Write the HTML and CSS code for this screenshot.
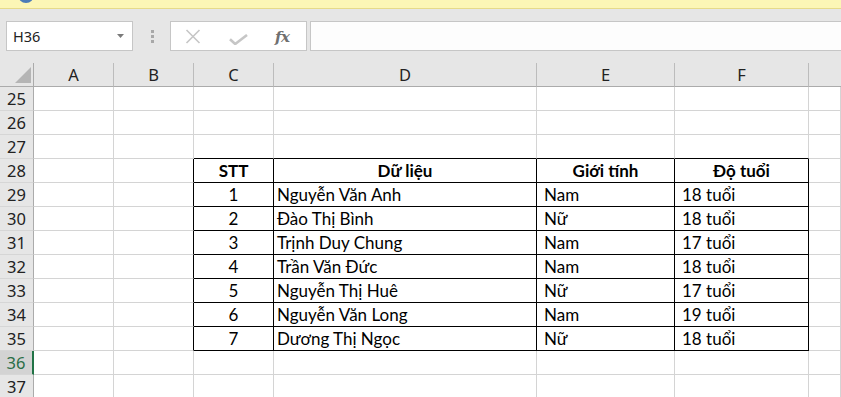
FILE: index.html
```html
<!DOCTYPE html>
<html lang="vi">
<head>
<meta charset="utf-8">
<title>Excel</title>
<link rel="stylesheet" href="styles.css">
</head>
<body>
<div class="msgbar"><span class="info"></span></div>
<div class="toolbar">
  <div class="namebox">
    <span class="ref">H36</span>
    <svg class="arrow" width="7" height="4" viewBox="0 0 7 4"><polygon points="0,0 7,0 3.5,4" fill="#7a7a7a"/></svg>
  </div>
  <div class="grip"><i></i><i></i><i></i></div>
  <div class="fbtns">
    <svg class="ico-x" width="16" height="15" viewBox="0 0 16 15"><path d="M1.5 1 L14.5 14 M14.5 1 L1.5 14" stroke="#c6c6c6" stroke-width="1.6" fill="none"/></svg>
    <svg class="ico-ok" width="19" height="11" viewBox="0 0 19 11"><path d="M1 5.2 L6.2 10 L18 1" stroke="#c6c6c6" stroke-width="2.6" fill="none"/></svg>
    <span class="fx">fx</span>
  </div>
  <div class="finput"></div>
</div>
<div class="sheet">
  <div class="h corner"><svg width="16" height="16" viewBox="0 0 16 16"><polygon points="16,0 16,16 0,16" fill="#b5b5b5"/></svg></div>
  <div class="h">A</div><div class="h">B</div><div class="h">C</div><div class="h">D</div><div class="h">E</div><div class="h">F</div><div class="h last"></div>

  <div class="r">25</div><div class="c"></div><div class="c"></div><div class="c"></div><div class="c"></div><div class="c"></div><div class="c"></div><div class="c"></div>
  <div class="r">26</div><div class="c"></div><div class="c"></div><div class="c"></div><div class="c"></div><div class="c"></div><div class="c"></div><div class="c"></div>
  <div class="r">27</div><div class="c"></div><div class="c"></div><div class="c bt"></div><div class="c bt"></div><div class="c bt"></div><div class="c bt"></div><div class="c"></div>

  <div class="r">28</div><div class="c"></div><div class="c bl"></div><div class="c tb th">STT</div><div class="c tb th">Dữ liệu</div><div class="c tb th">Giới tính</div><div class="c tb th">Độ tuổi</div><div class="c"></div>
  <div class="r">29</div><div class="c"></div><div class="c bl"></div><div class="c tb ctr">1</div><div class="c tb name">Nguyễn Văn Anh</div><div class="c tb ind">Nam</div><div class="c tb ind">18 tuổi</div><div class="c"></div>
  <div class="r">30</div><div class="c"></div><div class="c bl"></div><div class="c tb ctr">2</div><div class="c tb name">Đào Thị Bình</div><div class="c tb ind">Nữ</div><div class="c tb ind">18 tuổi</div><div class="c"></div>
  <div class="r">31</div><div class="c"></div><div class="c bl"></div><div class="c tb ctr">3</div><div class="c tb name">Trịnh Duy Chung</div><div class="c tb ind">Nam</div><div class="c tb ind">17 tuổi</div><div class="c"></div>
  <div class="r">32</div><div class="c"></div><div class="c bl"></div><div class="c tb ctr">4</div><div class="c tb name">Trần Văn Đức</div><div class="c tb ind">Nam</div><div class="c tb ind">18 tuổi</div><div class="c"></div>
  <div class="r">33</div><div class="c"></div><div class="c bl"></div><div class="c tb ctr">5</div><div class="c tb name">Nguyễn Thị Huê</div><div class="c tb ind">Nữ</div><div class="c tb ind">17 tuổi</div><div class="c"></div>
  <div class="r">34</div><div class="c"></div><div class="c bl"></div><div class="c tb ctr">6</div><div class="c tb name">Nguyễn Văn Long</div><div class="c tb ind">Nam</div><div class="c tb ind">19 tuổi</div><div class="c"></div>
  <div class="r">35</div><div class="c"></div><div class="c bl"></div><div class="c tb ctr">7</div><div class="c tb name">Dương Thị Ngọc</div><div class="c tb ind">Nữ</div><div class="c tb ind">18 tuổi</div><div class="c"></div>

  <div class="r sel">36</div><div class="c"></div><div class="c"></div><div class="c"></div><div class="c"></div><div class="c"></div><div class="c"></div><div class="c"></div>
  <div class="r">37</div><div class="c"></div><div class="c"></div><div class="c"></div><div class="c"></div><div class="c"></div><div class="c"></div><div class="c"></div>
</div>
</body>
</html>
```

FILE: styles.css
```css
* { box-sizing: border-box; }
html, body { margin: 0; padding: 0; }
body {
  width: 841px;
  height: 397px;
  overflow: hidden;
  background: #ffffff;
  font-family: "Noto Sans", "Open Sans", sans-serif;
}

.msgbar {
  height: 9px;
  background: #fcf6b6;
  border-bottom: 1px solid #e6da8a;
  display: flex;
  overflow: hidden;
}
.info {
  display: block;
  width: 16px;
  height: 16px;
  margin-left: 18px;
  margin-top: -13px;
  border-radius: 50%;
  background: #4b7cb8;
}

.toolbar {
  height: 54px;
  background: #e6e6e6;
  display: flex;
  align-items: flex-start;
  padding-top: 12px;
  padding-left: 6px;
}
.namebox {
  width: 127px;
  height: 30px;
  background: #ffffff;
  border: 1px solid #c6c6c6;
  display: flex;
  align-items: center;
  justify-content: space-between;
  padding: 0 8px 0 6px;
}
.ref {
  font-size: 14.5px;
  color: #222;
  line-height: 1;
}
.grip {
  width: 37px;
  height: 30px;
  display: flex;
  flex-direction: column;
  align-items: center;
  justify-content: center;
  gap: 2px;
  padding-left: 1px;
}
.grip i {
  display: block;
  width: 3px;
  height: 3px;
  background: #a8a8a8;
}
.fbtns {
  width: 137px;
  height: 30px;
  background: #ffffff;
  border: 1px solid #c6c6c6;
  display: flex;
  align-items: center;
  padding-left: 14px;
}
.ico-x { margin-top: 1px; }
.ico-ok { margin-left: 28px; margin-top: 6px; }
.fx {
  margin-left: 27px;
  font-family: "DejaVu Serif", "Liberation Serif", serif;
  font-style: italic;
  font-weight: bold;
  font-size: 15px;
  color: #707070;
  letter-spacing: -0.5px;
  margin-top: 1px;
}
.finput {
  flex: 1;
  height: 30px;
  margin-left: 3px;
  background: #fdfdfd;
  border: 1px solid #c6c6c6;
  border-right: none;
}

.sheet {
  display: grid;
  grid-template-columns: 34px 80px 80px 80px 263px 138px 134px 1fr;
  grid-auto-rows: 24px;
}
.h {
  background: #e6e6e6;
  border-right: 1px solid #bcbcbc;
  border-bottom: 1px solid #ababab;
  font-size: 16.5px;
  line-height: 23px;
  color: #222;
  text-align: center;
}
.h.last { border-right: none; }
.corner {
  display: flex;
  justify-content: flex-end;
  align-items: flex-start;
  padding: 4px 2px 0 0;
  border-right-color: #ababab;
}
.r {
  background: #e6e6e6;
  border-right: 1px solid #ababab;
  border-bottom: 1px solid #d6d6d6;
  font-size: 16.5px;
  line-height: 23px;
  color: #222;
  text-align: center;
}
.r.sel {
  background: #d3d3d3;
  color: #2a6e47;
  border-right: 2px solid #217346;
}
.c {
  border-right: 1px solid #d4d4d4;
  border-bottom: 1px solid #d4d4d4;
  font-family: "Lato", "Noto Sans", sans-serif;
  font-size: 17px;
  line-height: 23px;
  color: #000;
  white-space: nowrap;
  overflow: hidden;
}
.c.bt { border-bottom-color: #000; }
.c.bl { border-right-color: #000; }
.c.tb { border-right-color: #000; border-bottom-color: #000; }
.c.th { font-weight: bold; text-align: center; }
.c.ctr { text-align: center; }
.c.name { padding-left: 3px; }
.c.ind { padding-left: 7px; }
```
